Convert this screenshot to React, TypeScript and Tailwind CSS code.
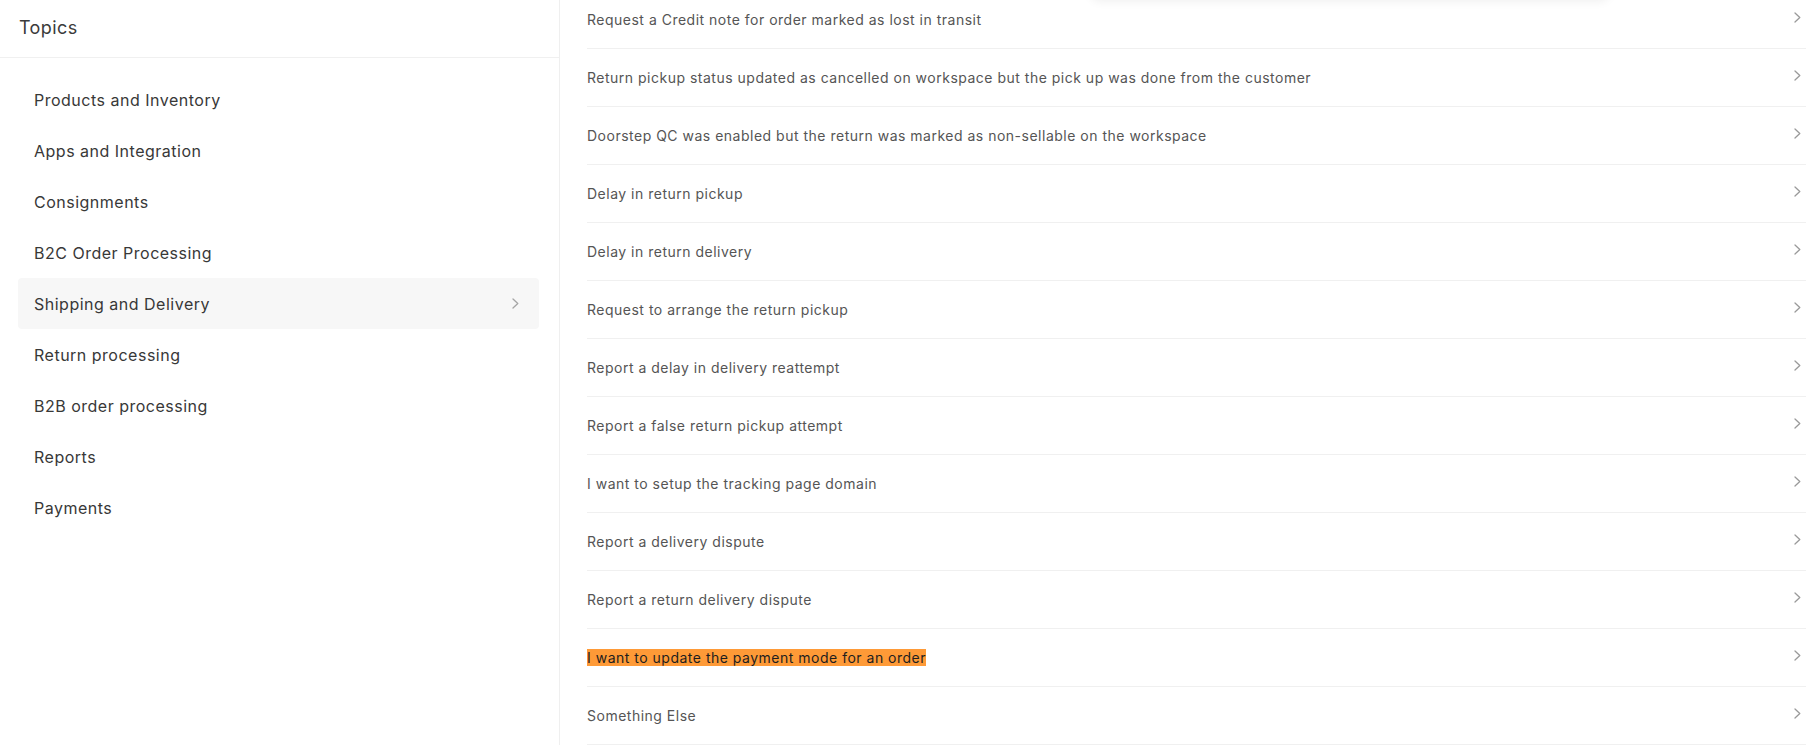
import React from 'react';

const topics = [
  'Products and Inventory',
  'Apps and Integration',
  'Consignments',
  'B2C Order Processing',
  'Shipping and Delivery',
  'Return processing',
  'B2B order processing',
  'Reports',
  'Payments',
];

const questions = [
  'Request a Credit note for order marked as lost in transit',
  'Return pickup status updated as cancelled on workspace but the pick up was done from the customer',
  'Doorstep QC was enabled but the return was marked as non-sellable on the workspace',
  'Delay in return pickup',
  'Delay in return delivery',
  'Request to arrange the return pickup',
  'Report a delay in delivery reattempt',
  'Report a false return pickup attempt',
  'I want to setup the tracking page domain',
  'Report a delivery dispute',
  'Report a return delivery dispute',
  'I want to update the payment mode for an order',
  'Something Else',
];

function Chevron({ className }: { className?: string }) {
  return (
    <svg width="7" height="11" viewBox="0 0 7 11" fill="none" className={className}>
      <polyline points="1,1 5.8,5.5 1,10" stroke="currentColor" strokeWidth="1.3" strokeLinecap="round" strokeLinejoin="round" />
    </svg>
  );
}

export default function App() {
  const selected = 'Shipping and Delivery';
  const highlighted = 'I want to update the payment mode for an order';

  return (
    <div
      className="flex h-[745px] w-full overflow-hidden bg-white"
      style={{ fontFamily: 'Inter, "Noto Sans", sans-serif' }}
    >
      {/* sidebar */}
      <aside className="w-[560px] shrink-0 border-r border-[#efefef] flex flex-col">
        <div className="h-[58px] border-b border-[#f0f0f0] pl-[19px] flex items-center">
          <h2 className="text-[18px] leading-none text-[#3b3b3b] tracking-[0.4px] -mt-[2px]">Topics</h2>
        </div>
        <ul className="pt-[16px] px-[18px] pr-[20px]">
          {topics.map((t) => (
            <li
              key={t}
              className={`h-[51px] pl-[16px] pr-[20px] flex items-center justify-between rounded-[4px] ${
                t === selected ? 'bg-[#f7f7f7]' : ''
              }`}
            >
              <span className="text-[16px] text-[#383838] tracking-[0.5px]">{t}</span>
              {t === selected && <Chevron className="text-[#a5a5a5]" />}
            </li>
          ))}
        </ul>
      </aside>

      {/* questions */}
      <main className="relative flex-1 pl-[27px] pr-[12px]">
        <div className="absolute left-[530px] top-[-20px] w-[520px] h-[20px] rounded-full shadow-[0_2px_10px_rgba(0,0,0,0.06)] bg-white" />
        <ul className="-mt-[9px]">
          {questions.map((q) => (
            <li key={q} className="h-[58px] border-b border-[#f0f0f0] flex items-center justify-between pr-[5px]">
              <span
                className={`text-[14px] leading-[17px] tracking-[0.5px] ${
                  q === highlighted ? 'bg-[#fe9a37] text-[#1e1e1e]' : 'text-[#555555]'
                }`}
              >
                {q}
              </span>
              <Chevron className="text-[#9a9a9a] -mt-[4px]" />
            </li>
          ))}
        </ul>
      </main>
    </div>
  );
}
